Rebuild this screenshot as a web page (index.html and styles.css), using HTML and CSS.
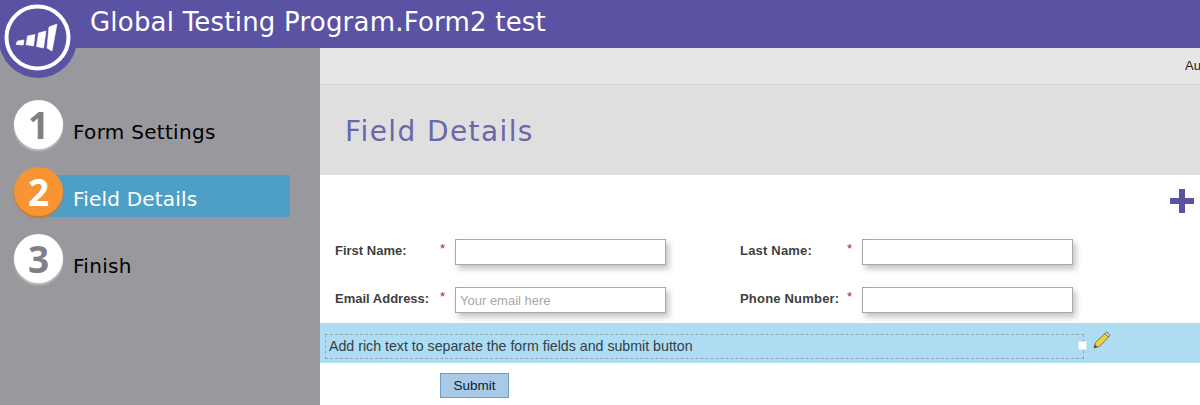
FILE: index.html
```html
<!DOCTYPE html>
<html lang="en">
<head>
<meta charset="utf-8">
<title>Field Details</title>
<link rel="stylesheet" href="styles.css">
</head>
<body>
<div class="app">
  <header class="topbar">
    <h1 class="title">Global Testing Program.Form2 test</h1>
  </header>
  <div class="logo">
    <svg viewBox="0 0 78 78" width="78" height="78" aria-hidden="true">
      <circle cx="37.500" cy="37.500" r="31" fill="none" stroke="#fff" stroke-width="4"/>
      <path d="M17.500 41 L24 40 L23.300 45 L16 44.500 Z" fill="#fff" stroke="#fff" stroke-width=".6" stroke-linejoin="round"/>
      <path d="M27.500 36 L35 34.500 L33.500 46 L26 44.800 Z" fill="#fff" stroke="#fff" stroke-width=".6" stroke-linejoin="round"/>
      <path d="M38.500 33 L46 31 L43.500 48 L36.500 46.500 Z" fill="#fff" stroke="#fff" stroke-width=".6" stroke-linejoin="round"/>
      <path d="M49 27 L57 24 L52 51 L47 48 Z" fill="#fff" stroke="#fff" stroke-width=".6" stroke-linejoin="round"/>
    </svg>
  </div>
  <div class="content">
    <nav class="sidebar">
      <div class="step">
        <span class="num">1</span>
        <span class="label">Form Settings</span>
      </div>
      <div class="step active">
        <span class="num">2</span>
        <span class="label">Field Details</span>
      </div>
      <div class="step">
        <span class="num">3</span>
        <span class="label">Finish</span>
      </div>
    </nav>
    <main class="main">
      <div class="toolbar"><span class="toolbar-text">Au</span></div>
      <div class="heading"><h2 class="heading-text">Field Details</h2></div>
      <div class="canvas">
        <div class="add-row">
          <svg class="plus" viewBox="0 0 24 24" width="24" height="24" aria-hidden="true">
            <path d="M9 0 H15 V9 H24 V15 H15 V24 H9 V15 H0 V9 H9 Z" fill="#5a52a2"/>
          </svg>
        </div>
        <div class="fields">
          <div class="field">
            <span class="field-label">First Name:</span><span class="star">*</span>
            <input class="input" type="text">
          </div>
          <div class="field field-right">
            <span class="field-label">Last Name:</span><span class="star">*</span>
            <input class="input" type="text">
          </div>
          <div class="field">
            <span class="field-label">Email Address:</span><span class="star">*</span>
            <input class="input" type="text" placeholder="Your email here">
          </div>
          <div class="field field-right">
            <span class="field-label">Phone Number:</span><span class="star">*</span>
            <input class="input" type="text">
          </div>
        </div>
        <div class="rich-band">
          <div class="rich-box">
            Add rich text to separate the form fields and submit button
            <span class="handle"></span>
          </div>
          <svg class="pencil" viewBox="0 0 18 18" width="18" height="18" aria-hidden="true">
            <path d="M1 17 L2.500 11.500 L12 2.500 L15.500 6 L6.500 15.500 Z" fill="#f0cf45" stroke="#8a7a30" stroke-width="1"/>
            <path d="M12 2.500 L13.800 1 L17 4.200 L15.500 6 Z" fill="#e4e4e4" stroke="#666" stroke-width="1"/>
            <path d="M1 17 L1.900 13.600 L4.400 16 Z" fill="#444"/>
          </svg>
        </div>
        <div class="submit-row">
          <button class="submit" type="button">Submit</button>
        </div>
      </div>
    </main>
  </div>
</div>
</body>
</html>
```

FILE: styles.css
```css
* { box-sizing: border-box; }
html, body { margin: 0; padding: 0; height: 100%; overflow: hidden; }
.app {
  position: relative;
  width: 1200px;
  height: 405px;
  display: flex;
  flex-direction: column;
  overflow: hidden;
  font-family: "DejaVu Sans", Verdana, sans-serif;
  background: #fff;
}
.topbar {
  height: 48px;
  flex: none;
  background: #5a52a2;
  padding-left: 90px;
}
.title {
  margin: 0;
  color: #fff;
  font-size: 26px;
  font-weight: 400;
  letter-spacing: 0.21px;
  line-height: 44px;
  white-space: nowrap;
}
.logo {
  position: absolute;
  left: -1px;
  top: 0;
  width: 78px;
  height: 78px;
  border-radius: 50%;
  background: #5a52a2;
}
.logo svg { display: block; margin-left: 1px; }
.content { flex: 1; display: flex; min-height: 0; }
.sidebar {
  width: 320px;
  flex: none;
  background: #99989d;
  padding: 52px 0 0 14px;
}
.step {
  display: flex;
  height: 67px;
  position: relative;
  color: #000;
}
.num {
  position: relative;
  z-index: 1;
  width: 49px;
  height: 49px;
  flex: none;
  border-radius: 50%;
  background: #fff;
  color: #808084;
  font-family: "Open Sans", sans-serif;
  font-size: 37px;
  font-weight: 700;
  line-height: 50px;
  text-align: center;
  box-shadow: 0 2px 2px #c2c2c4;
}
.label {
  margin-top: 8px;
  height: 42px;
  padding-left: 10px;
  font-size: 20px;
  letter-spacing: 0.3px;
  line-height: 48px;
  white-space: nowrap;
}
.step.active .num {
  background: #f79433;
  color: #fff;
  box-shadow: 0 2px 1px #c97a2c;
}
.step.active .label {
  margin-left: -14px;
  padding-left: 24px;
  width: 241px;
  background: #4e9fc5;
  color: #fff;
  letter-spacing: 0.2px;
}
.main { flex: 1; min-width: 0; display: flex; flex-direction: column; }
.toolbar {
  height: 37px;
  flex: none;
  background: #e6e6e6;
  border-bottom: 1px solid #d2d2d2;
  padding-left: 865px;
  font-family: "Liberation Sans", Arial, sans-serif;
  font-size: 13px;
  line-height: 36px;
  color: #222;
}
.heading {
  height: 90px;
  flex: none;
  background: #dfdfdf;
  padding-left: 25px;
}
.heading-text {
  margin: 0;
  font-size: 28px;
  font-weight: 400;
  letter-spacing: 1.4px;
  line-height: 93px;
  color: #6a68a8;
}
.canvas { flex: 1; background: #fff; font-family: "Liberation Sans", Arial, sans-serif; }
.add-row {
  height: 64px;
  padding: 14px 6px 0 0;
  display: flex;
  justify-content: flex-end;
}
.plus { display: block; }
.fields {
  display: grid;
  grid-template-columns: 405px 1fr;
  grid-auto-rows: 26px;
  row-gap: 22px;
  padding-left: 15px;
}
.field { display: flex; align-items: flex-start; }
.field-label {
  width: 105px;
  flex: none;
  font-size: 13px;
  font-weight: 700;
  line-height: 23px;
  color: #3f3f3f;
  white-space: nowrap;
}
.star {
  width: 15px;
  flex: none;
  font-size: 13px;
  line-height: 19px;
  color: #9a2b2b;
}
.input {
  width: 211px;
  height: 26px;
  border: 1px solid #a9a9a9;
  background: #fff;
  padding: 1px 4px 0;
  margin: 0;
  font-family: "Liberation Sans", Arial, sans-serif;
  font-size: 13px;
  box-shadow: 3px 4px 6px #c4c4c4;
  outline: none;
}
.input::placeholder { color: #a8a8a8; opacity: 1; }
.field-right .field-label { width: 107px; letter-spacing: 0.2px; }
.rich-band {
  margin-top: 10px;
  height: 40px;
  background: #aedcf3;
  display: flex;
  align-items: flex-start;
  padding: 11px 0 0 5px;
}
.rich-box {
  position: relative;
  width: 759px;
  height: 25px;
  border: 1px dashed #8fa8b8;
  padding-left: 3px;
  font-size: 14.2px;
  line-height: 23px;
  color: #333f46;
  white-space: nowrap;
}
.handle {
  position: absolute;
  right: -4px;
  top: 6px;
  width: 9px;
  height: 9px;
  background: #fff;
  border: 1px solid #d5e6ef;
}
.pencil { display: block; margin: -3px 0 0 9px; }
.submit-row { padding: 10px 0 0 120px; }
.submit {
  display: block;
  width: 69px;
  height: 25px;
  margin: 0;
  padding: 0;
  border: 1px solid #6d9cbc;
  background: #a8cae8;
  color: #10202c;
  font-family: "Liberation Sans", Arial, sans-serif;
  font-size: 13.500px;
}
```
